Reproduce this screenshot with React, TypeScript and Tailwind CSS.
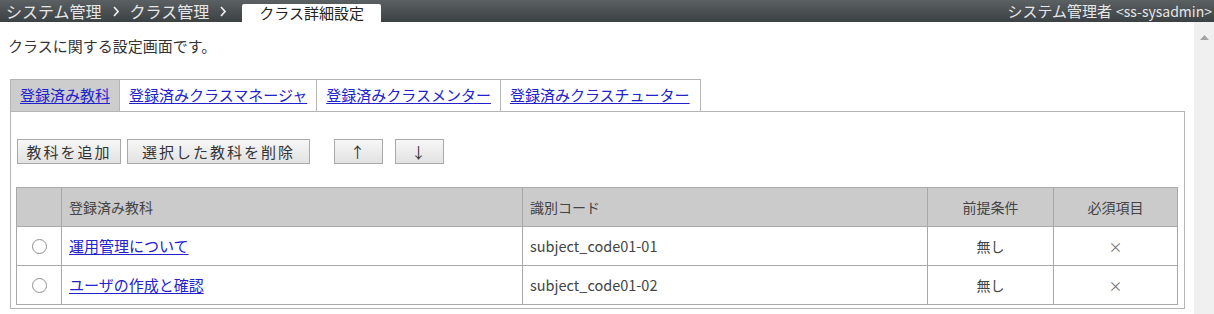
import React from 'react';

const Chevron = () => (
  <svg width="6" height="11" viewBox="0 0 6 11" className="mx-[11px] shrink-0">
    <path d="M1 1 L5 5.5 L1 10" fill="none" stroke="#ececec" strokeWidth="1.7" />
  </svg>
);

const rows = [
  { name: '運用管理について', code: 'subject_code01-01' },
  { name: 'ユーザの作成と確認', code: 'subject_code01-02' },
];

const tabs = ['登録済み教科', '登録済みクラスマネージャ', '登録済みクラスメンター', '登録済みクラスチューター'];

const btn =
  'h-[25px] border border-[#a9a9a9] bg-gradient-to-b from-[#f7f7f7] to-[#e2e2e2] text-[15px] text-[#333] tracking-[2px] leading-none';

export default function App() {
  return (
    <div
      className="w-[1214px] h-[314px] overflow-hidden bg-white text-[#333]"
      style={{ fontFamily: '"Noto Sans CJK JP", "Noto Sans", sans-serif' }}
    >
      <div className="h-[22px] flex items-end justify-between bg-gradient-to-b from-[#5b6063] to-[#3c4144] text-[#e6e6e6]">
        <div className="flex items-center h-[22px] pl-[6px] text-[16px] leading-[22px] whitespace-nowrap">
          <span className="block h-[22px]">システム管理</span>
          <Chevron />
          <span className="block h-[22px]">クラス管理</span>
          <Chevron />
          <div className="ml-[5px] mt-[4px] h-[18px] w-[139px] bg-white rounded-t-[2px] flex items-center justify-center text-[15px] leading-[18px] text-[#222]">
            クラス詳細設定
          </div>
        </div>
        <div className="h-[22px] flex items-center pr-[2px] text-[15px] leading-[22px] whitespace-nowrap">
          システム管理者<span className="ml-[4px] text-[14px]">&lt;ss-sysadmin&gt;</span>
        </div>
      </div>

      <div className="flex h-[292px]">
        <div className="flex-1 flex flex-col">
          <div className="pl-[8px] pt-[15px] text-[15px] leading-[17px] text-[#333]">クラスに関する設定画面です。</div>

          <div className="ml-[10px] mt-[25px] flex h-[32px] w-[691px] border border-b-0 border-[#b5b5b5]">
            {tabs.map((t, i) => (
              <div
                key={t}
                className={
                  'flex items-center px-[9px] text-[15px] ' +
                  (i === 0 ? 'bg-[#cdcdcd] ' : 'bg-white ') +
                  (i < tabs.length - 1 ? 'border-r border-[#b5b5b5]' : 'flex-1')
                }
              >
                <a href="#" className="text-[#2222cc] underline underline-offset-2">
                  {t}
                </a>
              </div>
            ))}
          </div>

          <div className="ml-[10px] mr-[9px] h-[198px] border border-[#b5b5b5] pt-[27px] pl-[5px] pr-[6px]">
            <div className="flex items-center">
              <button className={btn + ' w-[104px] ml-[1px]'}>教科を追加</button>
              <button className={btn + ' w-[183px] ml-[6px]'}>選択した教科を削除</button>
              <button className={btn + ' w-[49px] ml-[24px]'}>↑</button>
              <button className={btn + ' w-[49px] ml-[12px]'}>↓</button>
            </div>

            <table className="mt-[23px] w-full border-collapse text-[14px]">
              <thead>
                <tr className="h-[39px] bg-[#cbcbcb] text-[#444]">
                  <th className="w-[45px] border border-[#a8a8a8]"></th>
                  <th className="w-[461px] border border-[#a8a8a8] text-left font-normal pl-[7px]">登録済み教科</th>
                  <th className="w-[405px] border border-[#a8a8a8] text-left font-normal pl-[7px]">識別コード</th>
                  <th className="w-[126px] border border-[#a8a8a8] font-normal">前提条件</th>
                  <th className="border border-[#a8a8a8] font-normal">必須項目</th>
                </tr>
              </thead>
              <tbody>
                {rows.map((r) => (
                  <tr key={r.code} className="h-[39px]">
                    <td className="border border-[#a8a8a8]">
                      <div className="mx-auto w-[15px] h-[15px] rounded-full border border-[#8f8f8f] bg-white" />
                    </td>
                    <td className="border border-[#a8a8a8] pl-[7px] text-[15px]">
                      <a href="#" className="text-[#2222cc] underline underline-offset-2">
                        {r.name}
                      </a>
                    </td>
                    <td className="border border-[#a8a8a8] pl-[7px] text-[14.5px] text-[#444]">{r.code}</td>
                    <td className="border border-[#a8a8a8] text-center text-[#444]">無し</td>
                    <td className="border border-[#a8a8a8] text-center text-[#777]">×</td>
                  </tr>
                ))}
              </tbody>
            </table>
          </div>
        </div>

        <div className="w-[20px] bg-[#f0f0f0] flex justify-center pt-[13px]">
          <svg width="9" height="5" viewBox="0 0 9 5">
            <path d="M0 5 L4.5 0 L9 5 Z" fill="#a3a3a3" />
          </svg>
        </div>
      </div>
    </div>
  );
}
